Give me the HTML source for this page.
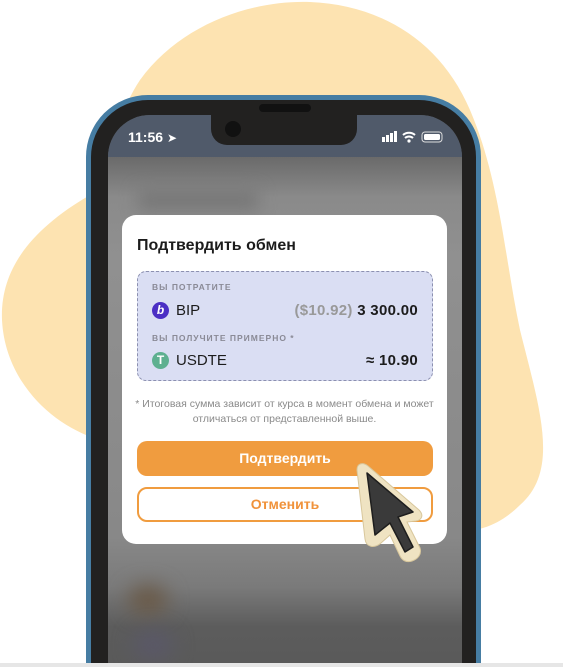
<!DOCTYPE html>
<html><head><meta charset="utf-8">
<style>
*{margin:0;padding:0;box-sizing:border-box}
html,body{width:563px;height:667px;overflow:hidden;background:#fff}
body{font-family:"Liberation Sans","DejaVu Sans",sans-serif}
#w{position:relative;width:563px;height:667px;overflow:hidden}
.abs{position:absolute}
</style></head><body><div id="w">
<svg class="abs" style="left:0;top:0" width="563" height="667">
<path d="M140,80 C180,25 250,0 310,2 C380,5 440,40 470,110 C500,180 505,260 520,330 C540,410 560,470 520,505 C500,525 480,530 470,530 L100,440 C50,425 5,380 2,320 C0,270 30,230 90,195 C110,150 120,110 140,80Z" fill="#fde3b1"/>
</svg>
<!-- phone -->
<div class="abs" style="left:86px;top:95px;width:395px;height:572px;background:#467da3;border-radius:62px 62px 0 0"></div>
<div class="abs" style="left:91px;top:100px;width:385px;height:567px;background:#222120;border-radius:57px 57px 0 0"></div>
<div class="abs" style="left:108px;top:115px;width:354px;height:548px;border-radius:42px 42px 0 0;overflow:hidden;background:#5c5c5c">
  <div class="abs" style="left:0;top:0;width:354px;height:42px;background:#505a6a"></div>
  <div class="abs" style="left:0;top:42px;width:354px;height:506px;background:linear-gradient(#6a6a6a 0,#8a8a8a 40px,#909090 100px,#888 380px,#7a7a7a 430px,#5c5c5c 470px,#5a5a5a 506px)"></div>
  <div class="abs" style="left:30px;top:75px;width:120px;height:20px;background:#777;filter:blur(8px)"></div>
  <div class="abs" style="left:20px;top:470px;width:40px;height:30px;background:#6a5a48;filter:blur(10px);border-radius:50%"></div>
  <div class="abs" style="left:25px;top:515px;width:40px;height:30px;background:#5a5868;filter:blur(10px);border-radius:50%"></div>
  <div class="abs" style="left:20px;top:14px;color:#fff;font-size:14px;font-weight:bold">11:56 <span style="font-size:12px">&#x27A4;</span></div>
  <svg class="abs" style="left:274px;top:15px" width="66" height="14">
    <rect x="0" y="7" width="3" height="5" fill="#fff"/><rect x="4" y="5" width="3" height="7" fill="#fff"/><rect x="8" y="3" width="3" height="9" fill="#fff"/><rect x="12" y="1" width="3" height="11" fill="#fff"/>
    <path d="M21,5 A9,9 0 0 1 33,5 M23,8 A6,6 0 0 1 31,8" stroke="#fff" stroke-width="2" fill="none"/><circle cx="27" cy="11" r="1.6" fill="#fff"/>
    <rect x="40" y="2" width="20" height="10" rx="3" fill="none" stroke="#ddd" stroke-width="1"/><rect x="42" y="4" width="16" height="6" rx="1.5" fill="#fff"/>
  </svg>
</div>
<div class="abs" style="left:211px;top:110px;width:146px;height:35px;background:#222120;border-radius:0 0 16px 16px"></div>
<div class="abs" style="left:259px;top:104px;width:52px;height:8px;background:#111;border-radius:4px"></div>
<div class="abs" style="left:225px;top:121px;width:16px;height:16px;background:#111;border-radius:50%"></div>
<div class="abs" style="left:0;top:663px;width:563px;height:4px;background:#e6e6e6"></div>
<!-- modal -->
<div class="abs" style="left:122px;top:215px;width:325px;height:329px;background:#fff;border-radius:14px">
  <div class="abs" style="left:15px;top:22px;font-size:16px;font-weight:bold;color:#1c1c1c">Подтвердить обмен</div>
  <div class="abs" style="left:15px;top:56px;width:296px;height:110px;background:#dadef3;border:1px dashed #8c90b0;border-radius:9px">
    <div class="abs" style="left:14px;top:10px;font-size:8.5px;font-weight:bold;color:#8a8a96;letter-spacing:1px">ВЫ ПОТРАТИТЕ</div>
    <div class="abs" style="left:14px;top:30px;width:17px;height:17px;border-radius:50%;background:#4b2fc4;color:#fff;font-size:12px;font-weight:bold;font-style:italic;text-align:center;line-height:17px">b</div>
    <div class="abs" style="left:38px;top:30px;font-size:15px;color:#1c1c1c">BIP</div>
    <div class="abs" style="right:14px;top:30px;font-size:15px;font-weight:bold;color:#1c1c1c;letter-spacing:0.3px"><span style="color:#999">($10.92)</span> 3 300.00</div>
    <div class="abs" style="left:14px;top:61px;font-size:8.5px;font-weight:bold;color:#8a8a96;letter-spacing:1px">ВЫ ПОЛУЧИТЕ ПРИМЕРНО *</div>
    <div class="abs" style="left:14px;top:80px;width:17px;height:17px;border-radius:50%;background:#5eb090;color:#fff;font-size:12px;font-weight:bold;text-align:center;line-height:17px">T</div>
    <div class="abs" style="left:38px;top:80px;font-size:15px;color:#1c1c1c">USDTE</div>
    <div class="abs" style="right:14px;top:80px;font-size:15px;font-weight:bold;color:#1c1c1c;letter-spacing:0.3px">≈ 10.90</div>
  </div>
  <div class="abs" style="left:10px;top:182px;width:305px;text-align:center;font-size:10.5px;line-height:15px;color:#8a8a8a">* Итоговая сумма зависит от курса в момент обмена и может отличаться от представленной выше.</div>
  <div class="abs" style="left:15px;top:226px;width:296px;height:35px;background:#f09c3f;border-radius:10px;color:#fff;font-size:14px;font-weight:bold;text-align:center;line-height:35px">Подтвердить</div>
  <div class="abs" style="left:15px;top:272px;width:296px;height:35px;border:2px solid #f09c3f;border-radius:10px;color:#f0923a;font-size:14px;font-weight:bold;text-align:center;line-height:31px">Отменить</div>
</div>
<svg class="abs" style="left:0;top:0" width="563" height="667">
<path d="M357,470 C357,463 363,462 368,466 L419,510 C424,515 422,520 416,521 L407,522 L420,548 C422,554 418,559 412,561 C406,563 402,560 400,556 L390,535 L381,543 C374,549 366,547 365,539 Z" fill="#efe3c2" stroke="#d8c79c" stroke-width="1"/>
<path d="M367,473 L413,512 L398,517 L413,547 L405,552 L390,523 L375,535 Z" fill="#3a3a3a" stroke="#1e1e1e" stroke-width="1.5" stroke-linejoin="round"/>
</svg>
</div></body></html>
